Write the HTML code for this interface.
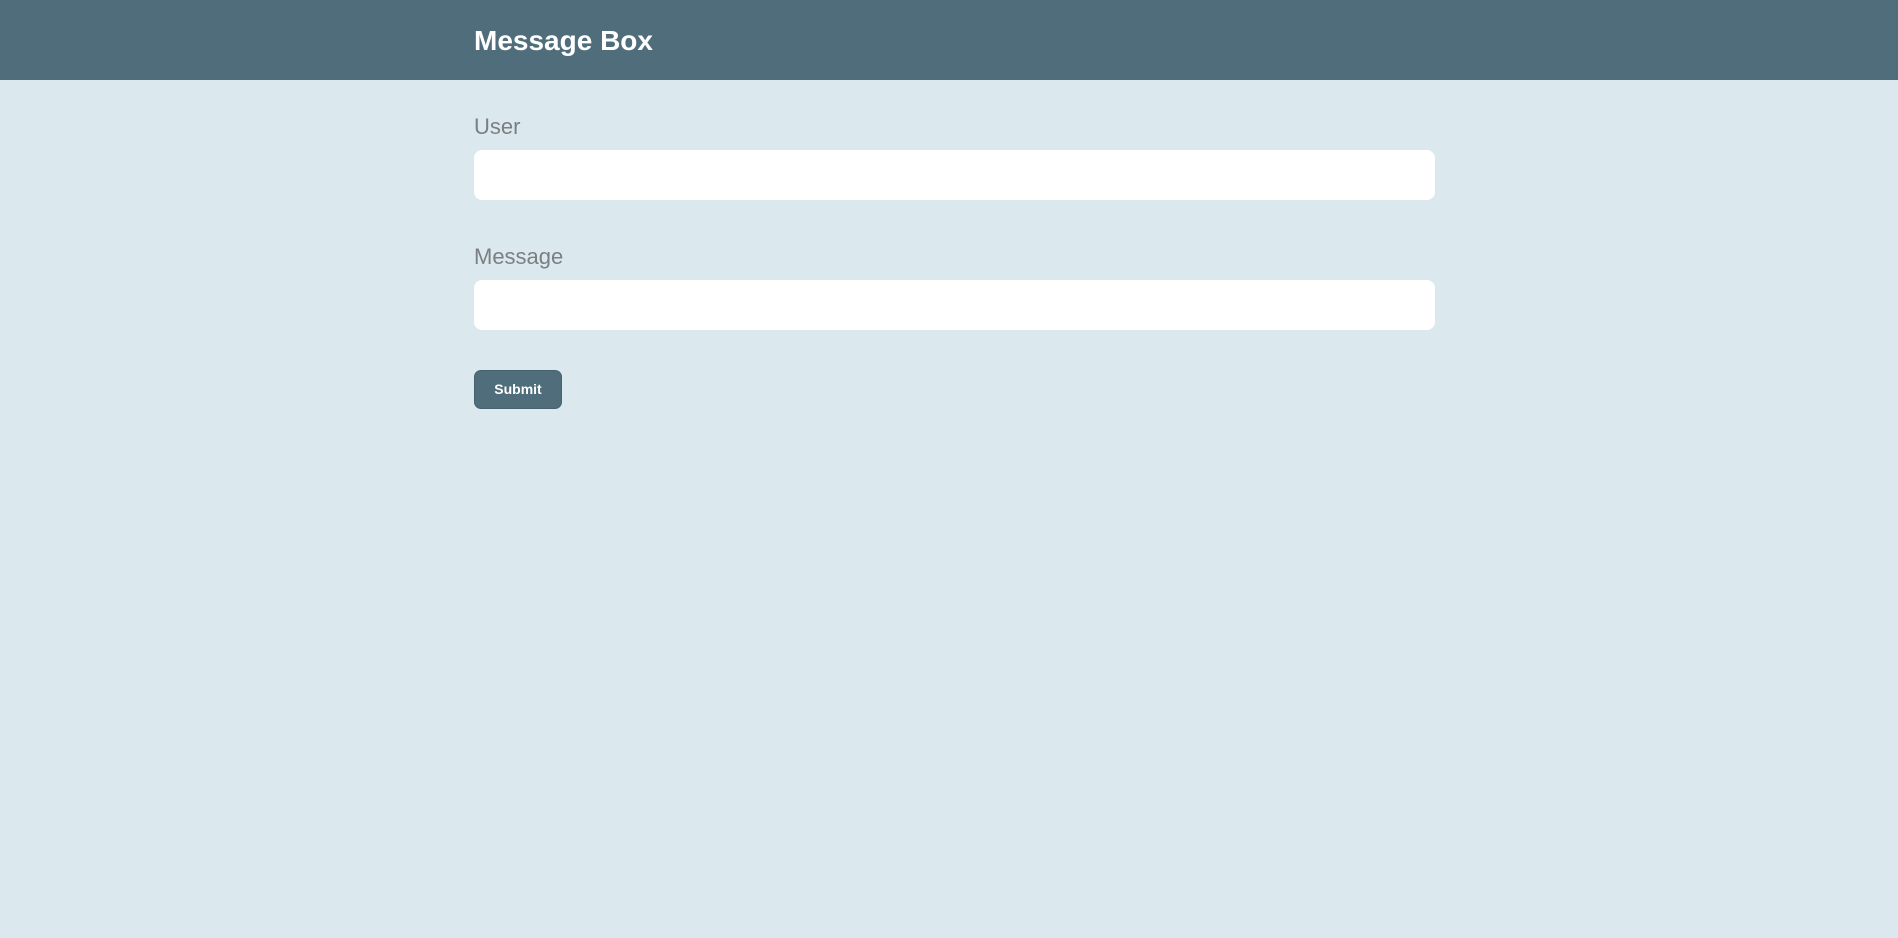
<!DOCTYPE html>
<html><head><meta charset="utf-8"><style>
html,body{margin:0;padding:0;}
body{width:1898px;height:938px;background:#dbe8ee;font-family:"Liberation Sans","DejaVu Sans",sans-serif;position:relative;overflow:hidden;}
.hdr{position:absolute;left:0;top:0;width:1898px;height:80px;background:#4f6d7a;}
.hdr h1{position:absolute;left:474px;top:24px;margin:0;font-size:28px;line-height:34px;font-weight:bold;color:#fff;}
.lbl{position:absolute;left:474px;font-size:22px;line-height:26px;color:#7b7f82;}
.inp{position:absolute;left:474px;width:961px;height:50px;background:#fff;border-radius:8px;}
.btn{position:absolute;left:474px;top:370px;width:88px;height:39px;background:#4f6d7a;border-radius:7px;color:#fff;font-size:14px;font-weight:bold;text-align:center;line-height:37px;box-sizing:border-box;border:1px solid #46626e;}
</style></head><body>
<div class="hdr"><h1>Message Box</h1></div>
<div class="lbl" style="top:114px">User</div>
<div class="inp" style="top:150px"></div>
<div class="lbl" style="top:244px">Message</div>
<div class="inp" style="top:280px"></div>
<div class="btn">Submit</div>
</body></html>
